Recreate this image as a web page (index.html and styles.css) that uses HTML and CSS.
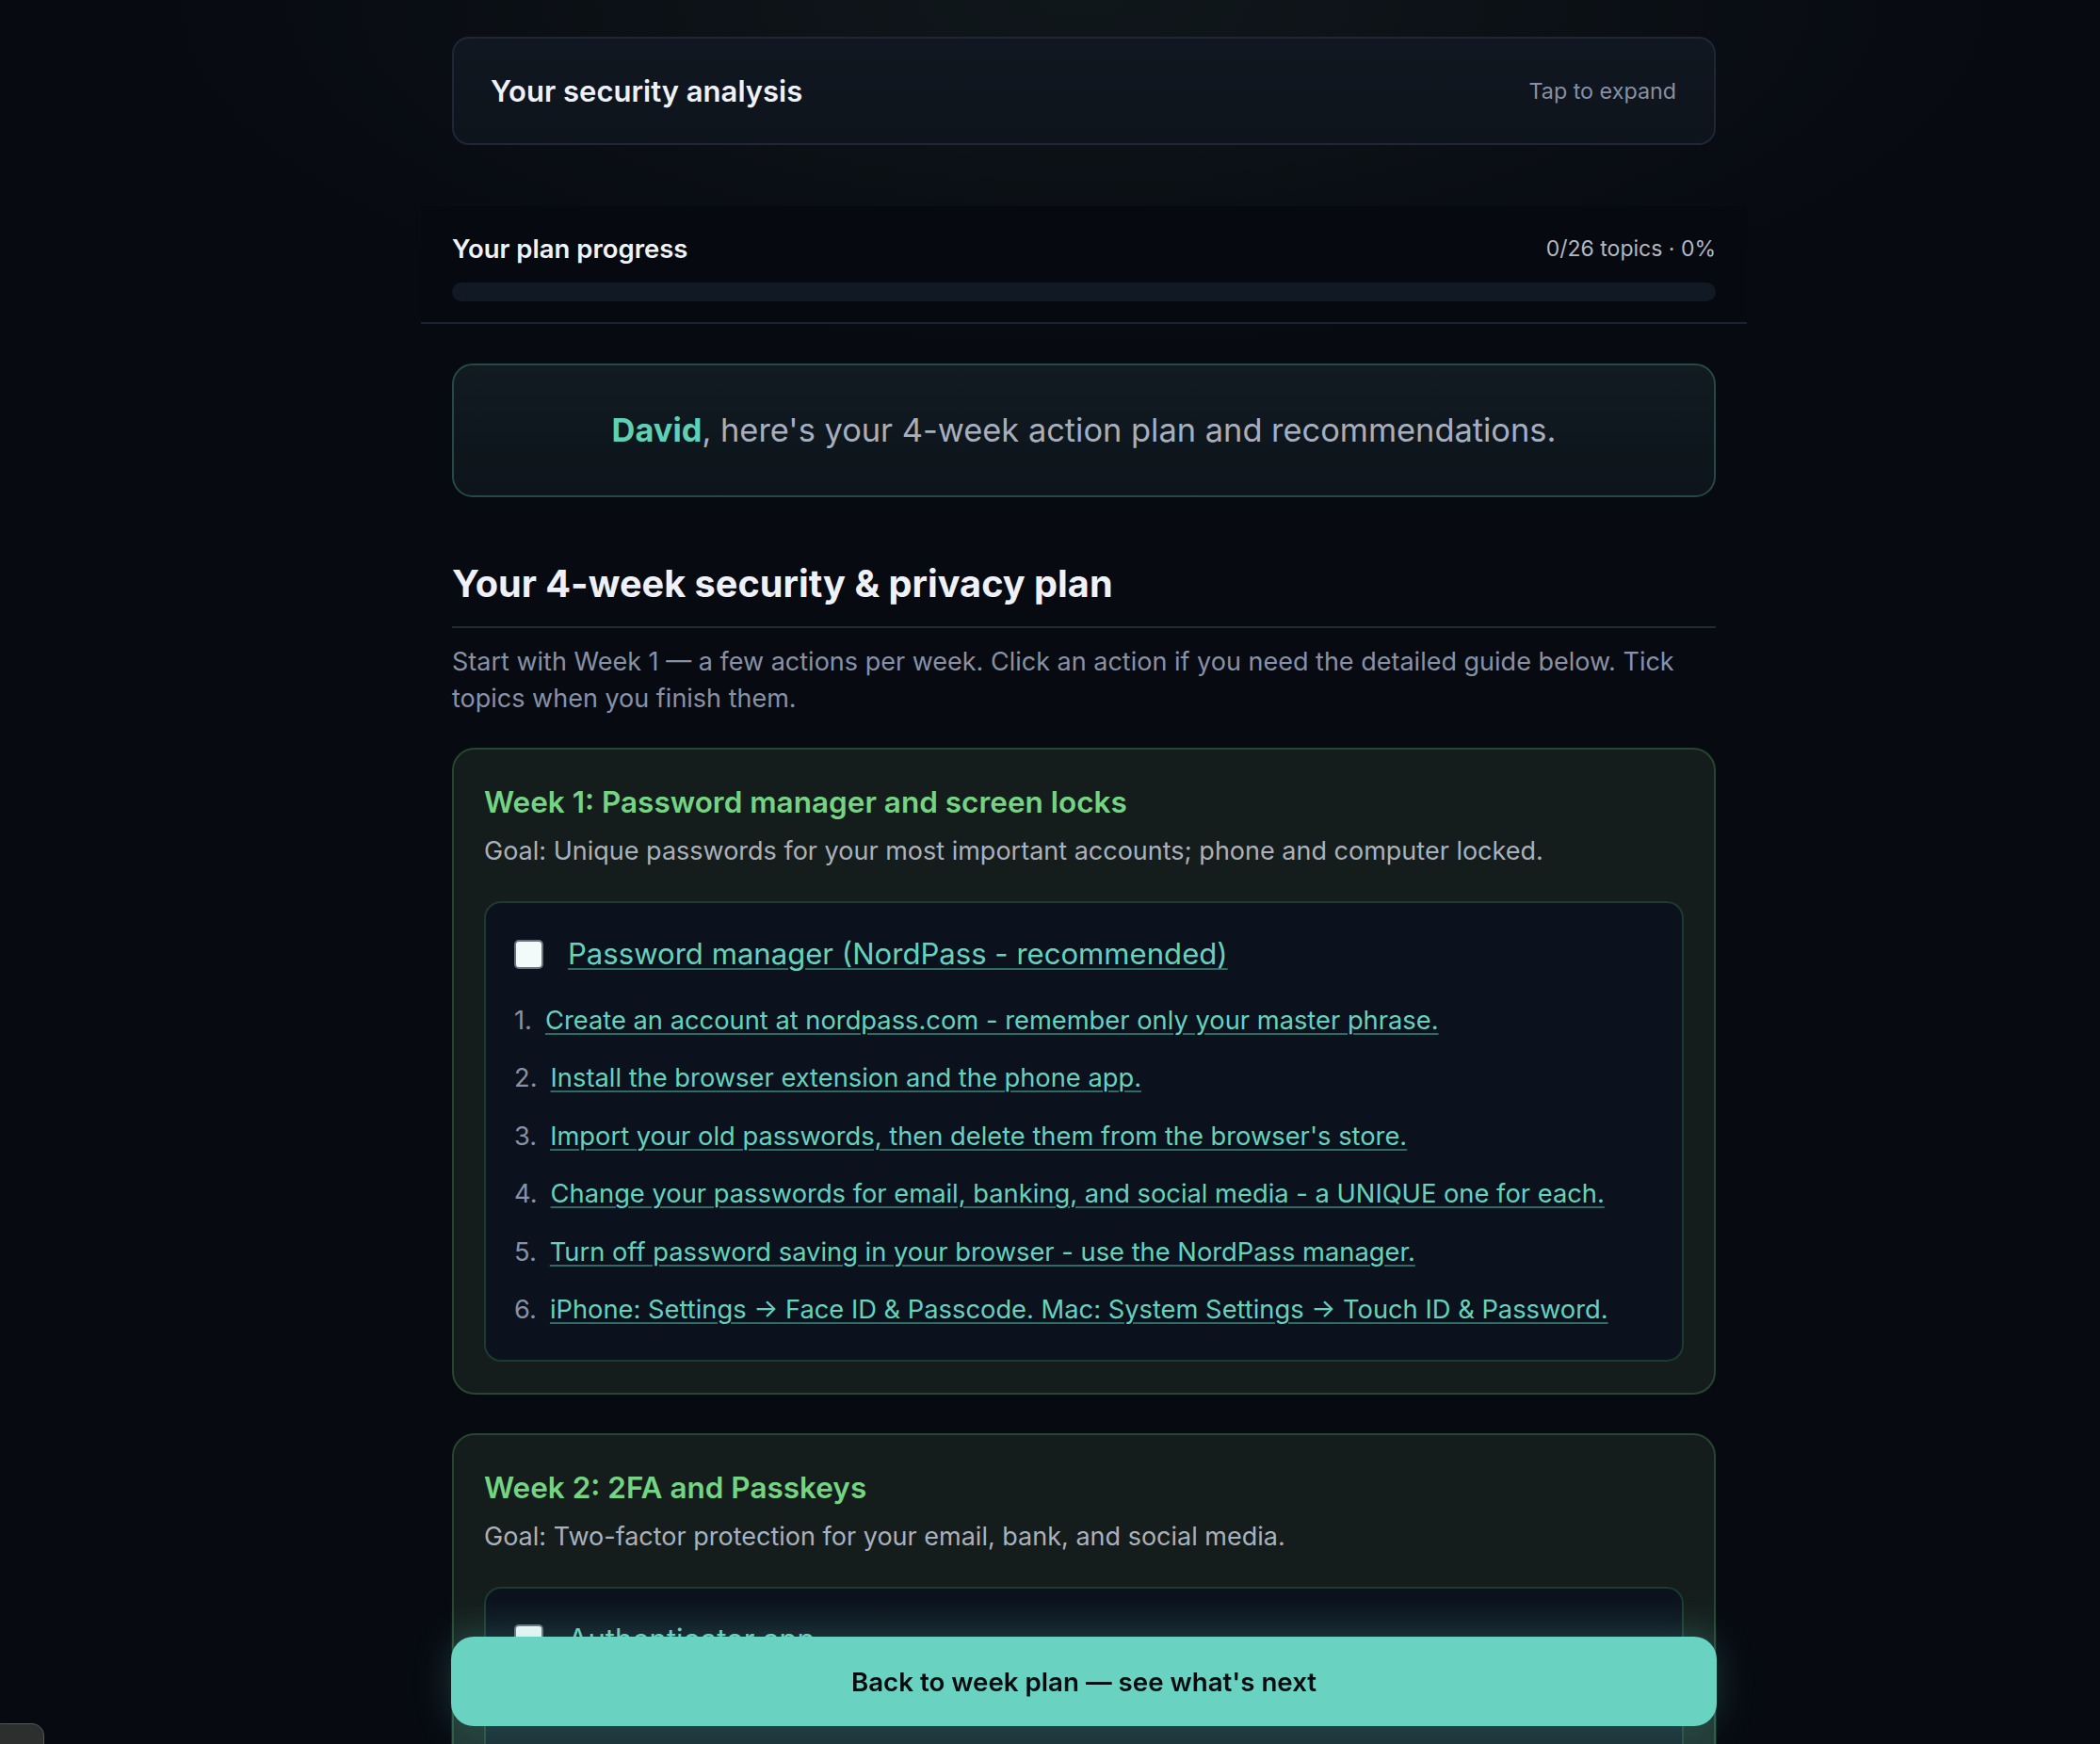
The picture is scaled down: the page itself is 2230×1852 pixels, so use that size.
FILE: index.html
```html
<!DOCTYPE html>
<html lang="en">

<head>
    <meta charset="UTF-8">
    <meta name="viewport" content="width=device-width, initial-scale=1.0">
    <title>Your security plan</title>
    <link rel="stylesheet" href="styles.css">
</head>

<body>
    <div class="page">
        <main class="wrap">
            <button class="analysis" type="button">
                <span class="analysis-title">Your security analysis</span>
                <span class="analysis-hint">Tap to expand</span>
            </button>

            <section class="progress">
                <div class="progress-head">
                    <span class="progress-label">Your plan progress</span>
                    <span class="progress-count">0/26 topics · 0%</span>
                </div>
                <div class="progress-track"><div class="progress-fill" style="width: 0%"></div></div>
            </section>

            <div class="greeting"><strong>David</strong>, here's your 4-week action plan and recommendations.</div>

            <h2 class="plan-title">Your 4-week security &amp; privacy plan</h2>
            <p class="plan-intro">Start with Week 1 — a few actions per week. Click an action if you need the detailed guide below. Tick topics when you finish them.</p>

            <section class="week">
                <h3 class="week-title">Week 1: Password manager and screen locks</h3>
                <p class="week-goal">Goal: Unique passwords for your most important accounts; phone and computer locked.</p>
                <div class="topic">
                    <label class="topic-head">
                        <input type="checkbox" class="tick">
                        <a href="#password-manager" class="topic-link">Password manager (NordPass - recommended)</a>
                    </label>
                    <ol class="steps">
                        <li><a href="#pm-1">Create an account at nordpass.com - remember only your master phrase.</a></li>
                        <li><a href="#pm-2">Install the browser extension and the phone app.</a></li>
                        <li><a href="#pm-3">Import your old passwords, then delete them from the browser's store.</a></li>
                        <li><a href="#pm-4">Change your passwords for email, banking, and social media - a UNIQUE one for each.</a></li>
                        <li><a href="#pm-5">Turn off password saving in your browser - use the NordPass manager.</a></li>
                        <li><a href="#pm-6">iPhone: Settings → Face ID &amp; Passcode. Mac: System Settings → Touch ID &amp; Password.</a></li>
                    </ol>
                </div>
            </section>

            <section class="week">
                <h3 class="week-title">Week 2: 2FA and Passkeys</h3>
                <p class="week-goal">Goal: Two-factor protection for your email, bank, and social media.</p>
                <div class="topic">
                    <label class="topic-head">
                        <input type="checkbox" class="tick">
                        <a href="#authenticator" class="topic-link">Authenticator app</a>
                    </label>
                    <ol class="steps">
                        <li><a href="#au-1">Install an authenticator app on your phone.</a></li>
                        <li><a href="#au-2">Turn on 2FA for your email first, then your bank.</a></li>
                        <li><a href="#au-3">Save the backup codes in NordPass.</a></li>
                    </ol>
                </div>
            </section>
        </main>
    </div>

    <div class="bottom-bar">
        <button class="back-btn" type="button">Back to week plan — see what's next</button>
    </div>

    <div class="dev-badge"></div>
</body>

</html>
```

FILE: styles.css
```css
:root {
    --bg: #070a11;
    --teal: #66d2bd;
    --teal-line: #2e6b63;
    --green: #74d483;
    --muted: #8891a5;
    --soft: #aab1bd;
    --white: #eef1f7;
}
* {
    box-sizing: border-box;
}
html,
body {
    margin: 0;
    padding: 0;
    overflow: hidden;
}
body {
    background-color: var(--bg);
    background-image: radial-gradient(ellipse 1000px 380px at 1150px 0, #10171b 0%, rgba(7, 10, 17, 0) 100%);
    font-family: Inter, 'Noto Sans', 'Liberation Sans', sans-serif;
    color: var(--white);
}
.page {
    display: flex;
    justify-content: center;
    padding-left: 72px;
}
.wrap {
    width: 1342px;
    padding: 39px 0 300px;
}

/* security analysis toggle */
.analysis {
    display: flex;
    align-items: center;
    justify-content: space-between;
    width: 100%;
    height: 115px;
    padding: 0 40px 0 39px;
    border: 2px solid #1f2636;
    border-radius: 18px;
    background: linear-gradient(180deg, #101720 0%, #0e141c 100%);
    font-family: inherit;
    cursor: pointer;
}
.analysis-title {
    font-size: 31px;
    font-weight: 600;
    color: var(--white);
}
.analysis-hint {
    font-size: 23.3px;
    color: #8790a3;
}

/* progress */
.progress {
    margin: 65px -33px 0;
    padding: 28px 33px 22px;
    background: #060910;
    border-bottom: 2px solid #1b2232;
}
.progress-head {
    display: flex;
    justify-content: space-between;
    line-height: 34px;
}
.progress-label {
    font-size: 27.5px;
    font-weight: 600;
    color: #f1f3f8;
}
.progress-count {
    font-size: 23px;
    color: #b3b8c3;
}
.progress-track {
    margin-top: 19px;
    height: 20px;
    border-radius: 10px;
    background: #111925;
    overflow: hidden;
}
.progress-fill {
    height: 100%;
    background: var(--teal);
}

/* greeting */
.greeting {
    margin-top: 42px;
    height: 142px;
    display: flex;
    align-items: center;
    justify-content: center;
    padding-bottom: 2px;
    border: 2px solid #244a47;
    border-radius: 22px;
    background: linear-gradient(180deg, #111b21 0%, #0d141b 100%);
    font-size: 34.4px;
    color: #a7afbe;
}
.greeting strong {
    color: #5fd0b5;
    font-weight: 700;
}

/* plan heading */
.plan-title {
    margin: 68px 0 0;
    padding-bottom: 21px;
    border-bottom: 2px solid #222939;
    font-size: 39.7px;
    line-height: 48px;
    font-weight: 700;
    color: var(--white);
}
.plan-intro {
    margin: 16px 0 0;
    font-size: 27px;
    line-height: 39px;
    color: var(--muted);
}

/* weeks */
.week {
    margin-top: 33px;
    padding: 34px 32px 33px;
    border: 2px solid #27462f;
    border-radius: 24px;
    background: #141d1b;
}
.week + .week {
    margin-top: 41px;
}
.week-title {
    margin: 0;
    font-size: 31.5px;
    line-height: 44px;
    font-weight: 600;
    color: var(--green);
}
.week-goal {
    margin: 10px 0 0;
    font-size: 27px;
    line-height: 39px;
    color: var(--soft);
}
.topic {
    margin-top: 34px;
    padding: 33px 30px 34px;
    border: 2px solid #1e3a30;
    border-radius: 18px;
    background: #0c121d;
}
.topic-head {
    display: flex;
    align-items: center;
    height: 42px;
    gap: 26px;
}
.tick {
    appearance: none;
    -webkit-appearance: none;
    margin: 0;
    width: 31px;
    height: 31px;
    border: 2px solid #6c727b;
    border-radius: 5px;
    background: #f3fafa;
    flex: none;
}
.topic-link {
    font-size: 31.1px;
    line-height: 42px;
    color: var(--teal);
    text-decoration: underline;
    text-decoration-color: var(--teal-line);
    text-decoration-thickness: 2px;
    text-underline-offset: 4px;
}
.steps {
    list-style: none;
    counter-reset: step;
    margin: 30px 0 0;
    padding: 0;
}
.steps li {
    counter-increment: step;
    font-size: 27.3px;
    line-height: 39px;
}
.steps li + li {
    margin-top: 22.4px;
}
.steps li::before {
    content: counter(step) ".";
    color: var(--muted);
    margin-right: 14px;
}
.steps a {
    color: var(--teal);
    text-decoration: underline;
    text-decoration-color: var(--teal-line);
    text-decoration-thickness: 2px;
    text-underline-offset: 4px;
}

/* sticky action */
.bottom-bar {
    position: fixed;
    bottom: 0;
    left: calc(50% + 36px);
    transform: translateX(-50%);
    width: 1344px;
    padding: 50px 0 19px;
    background: linear-gradient(180deg, rgba(105, 210, 192, 0) 0%, rgba(105, 210, 192, 0.08) 45%, rgba(105, 210, 192, 0.16) 100%);
}
.back-btn {
    display: block;
    width: 100%;
    height: 95px;
    border: 0;
    border-radius: 24px;
    background: #69d2c0;
    box-shadow: 0 0 40px rgba(105, 210, 192, 0.22);
    font-family: inherit;
    font-size: 27.7px;
    font-weight: 600;
    color: #070b10;
    cursor: pointer;
}
.dev-badge {
    position: fixed;
    left: -12px;
    bottom: -30px;
    width: 59px;
    height: 52px;
    border: 1px solid #555756;
    border-radius: 13px;
    background: #2d2e2e;
}
```
